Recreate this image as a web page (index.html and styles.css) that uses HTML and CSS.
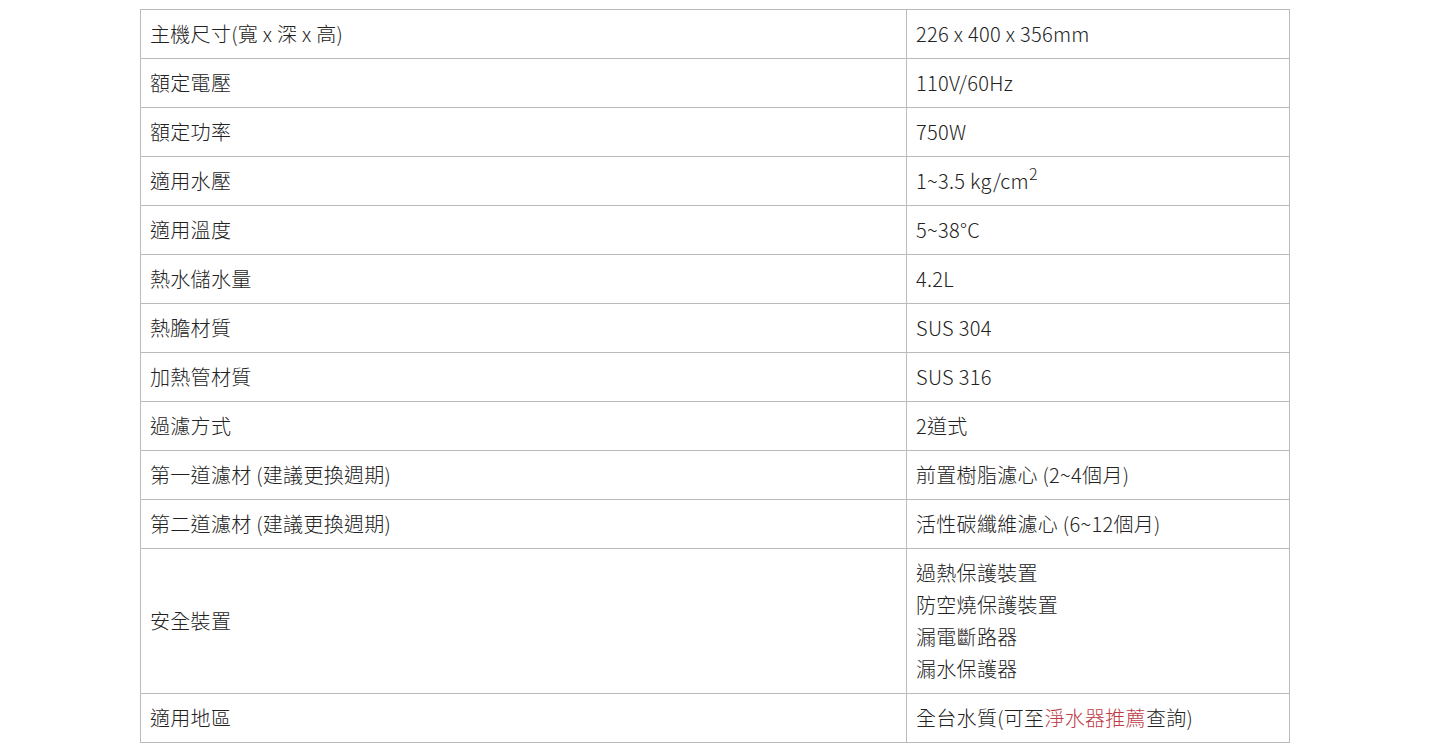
FILE: index.html
```html
<!DOCTYPE html>
<html lang="zh-Hant">
<head>
<meta charset="utf-8">
<link rel="stylesheet" href="styles.css">
</head>
<body>
<div class="wrap">
<table class="spec">
<tbody>
<tr><td class="k">主機尺寸(寬 x 深 x 高)</td><td class="v">226 x 400 x 356mm</td></tr>
<tr><td class="k">額定電壓</td><td class="v">110V/60Hz</td></tr>
<tr><td class="k">額定功率</td><td class="v">750W</td></tr>
<tr><td class="k">適用水壓</td><td class="v">1~3.5 kg/cm<sup>2</sup></td></tr>
<tr><td class="k">適用溫度</td><td class="v">5~38°C</td></tr>
<tr><td class="k">熱水儲水量</td><td class="v">4.2L</td></tr>
<tr><td class="k">熱膽材質</td><td class="v">SUS 304</td></tr>
<tr><td class="k">加熱管材質</td><td class="v">SUS 316</td></tr>
<tr><td class="k">過濾方式</td><td class="v">2道式</td></tr>
<tr><td class="k">第一道濾材 (建議更換週期)</td><td class="v">前置樹脂濾心 (2~4個月)</td></tr>
<tr><td class="k">第二道濾材 (建議更換週期)</td><td class="v">活性碳纖維濾心 (6~12個月)</td></tr>
<tr><td class="k">安全裝置</td><td class="v">過熱保護裝置<br>防空燒保護裝置<br>漏電斷路器<br>漏水保護器</td></tr>
<tr><td class="k">適用地區</td><td class="v">全台水質(可至<a class="link" href="#">淨水器推薦</a>查詢)</td></tr>
</tbody>
</table>
</div>
</body>
</html>
```

FILE: styles.css
```css
html, body {
  margin: 0;
  padding: 0;
  background: #fff;
}
body {
  font-family: "Noto Sans CJK TC", "Noto Sans", sans-serif;
  color: #222;
}
.wrap {
  padding: 9px 0 0 140px;
}
.spec {
  border-collapse: collapse;
  width: 1150px;
  table-layout: fixed;
}
.spec td {
  border: 1px solid #bbb;
  padding: 8px 9px;
  font-size: 20px;
  font-weight: 300;
  letter-spacing: 0.3px;
  line-height: 32px;
  vertical-align: middle;
  text-align: left;
}
.spec td.k {
  width: 766px;
  box-sizing: border-box;
}
.spec sup {
  font-size: 16px;
  line-height: 0;
  vertical-align: 9px;
}
.link {
  color: #c03a45;
  text-decoration: none;
}
```
